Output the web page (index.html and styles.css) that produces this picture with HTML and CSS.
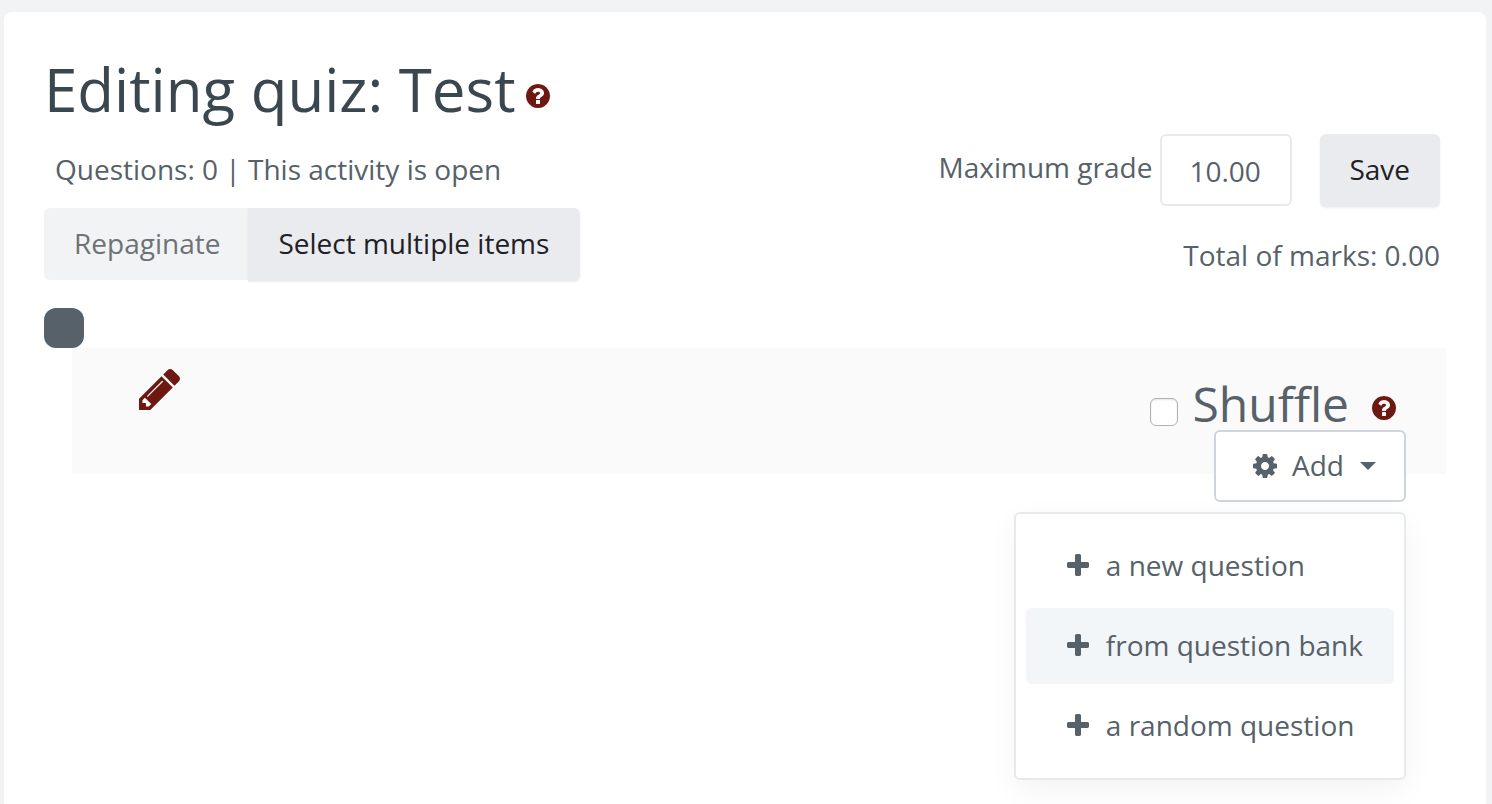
FILE: index.html
```html
<!DOCTYPE html>
<html lang="en">
<head>
<meta charset="utf-8">
<meta name="viewport" content="width=device-width, initial-scale=1">
<title>Editing quiz: Test</title>
<link rel="stylesheet" href="styles.css">
</head>
<body>
<svg class="sprite" aria-hidden="true">
  <symbol id="help" viewBox="128 128 1536 1536"><path d="M1024 1376v-192q0-14-9-23t-23-9h-192q-14 0-23 9t-9 23v192q0 14 9 23t23 9h192q14 0 23-9t9-23zm256-672q0-88-55.500-163t-138.500-116-170-41q-243 0-371 213-15 24 8 42l132 100q7 6 19 6 16 0 25-12 53-68 86-92 34-24 86-24 48 0 85.500 26t37.500 59q0 38-20 61t-68 45q-63 28-115.500 86.500t-52.500 125.500v36q0 14 9 23t23 9h192q14 0 23-9t9-23q0-19 21.500-49.500t54.500-49.500q32-18 49-28.500t46-35 44.500-48 28-60.500 12.500-81zm384 192q0 209-103 385.500t-279.500 279.500-385.500 103-385.500-103-279.500-279.500-103-385.500 103-385.500 279.500-279.500 385.500-103 385.500 103 279.500 279.500 103 385.500z"/></symbol>
  <symbol id="plus" viewBox="192 128 1408 1408"><path d="M1600 736v192q0 40-28 68t-68 28h-416v416q0 40-28 68t-68 28h-192q-40 0-68-28t-28-68v-416h-416q-40 0-68-28t-28-68v-192q0-40 28-68t68-28h416v-416q0-40 28-68t68-28h192q40 0 68 28t28 68v416h416q40 0 68 28t28 68z"/></symbol>
</svg>
<main class="card">
  <header class="title">
    <h1>Editing quiz: Test</h1>
    <button class="help" type="button" aria-label="Help with editing quiz"><svg class="icon"><use href="#help"/></svg></button>
  </header>

  <div class="toolbar">
    <div class="toolbar-left">
      <p class="status">Questions: 0 | This activity is open</p>
      <div class="btn-group">
        <button class="btn" type="button" disabled>Repaginate</button>
        <button class="btn" type="button">Select multiple items</button>
      </div>
    </div>
    <form class="grade">
      <div class="grade-row">
        <label for="grade">Maximum grade</label>
        <input class="grade-input" id="grade" type="text" value="10.00">
        <button class="btn" type="button">Save</button>
      </div>
      <p class="total">Total of marks: 0.00</p>
    </form>
  </div>

  <div class="marker"></div>
  <section class="section">
    <button class="edit" type="button" aria-label="Edit heading">
      <svg class="pencil" viewBox="128 149 1515 1515"><path d="M491 1536l91-91-235-235-91 91v107h128v128h107zm523-928q0-22-22-22-10 0-17 7l-542 542q-7 7-7 17 0 22 22 22 10 0 17-7l542-542q7-7 7-17zm-54-192l416 416-832 832h-416v-416zm683 96q0 53-37 90l-166 166-416-416 166-165q36-38 90-38 53 0 91 38l235 234q37 39 37 91z"/></svg>
    </button>
    <div class="section-tools">
      <div class="shuffle">
        <input class="check" id="shuffle" type="checkbox">
        <label for="shuffle">Shuffle</label>
        <button class="help" type="button" aria-label="Help with shuffle"><svg class="icon"><use href="#help"/></svg></button>
      </div>
      <div class="dropdown">
        <button class="add" type="button" aria-expanded="true">
          <svg class="icon" viewBox="128 128 1536 1536"><path d="M1152 896q0-106-75-181t-181-75-181 75-75 181 75 181 181 75 181-75 75-181zm512-109v222q0 12-8 23t-20 13l-185 28q-19 54-39 91 35 50 107 138 10 12 10 25t-9 23q-27 37-99 108t-94 71q-12 0-26-9l-138-108q-44 23-91 38-16 136-29 186-7 28-36 28h-222q-14 0-24.500-8.500t-11.500-21.500l-28-184q-49-16-90-37l-141 107q-10 9-25 9-14 0-25-11-126-114-165-168-7-10-7-23 0-12 8-23 15-21 51-66.500t54-70.500q-27-50-41-99l-183-27q-13-2-21-12.500t-8-23.500v-222q0-12 8-23t19-13l186-28q14-46 39-92-40-57-107-138-10-12-10-24 0-10 9-23 26-36 98.500-107.500t94.500-71.500q13 0 26 10l138 107q44-23 91-38 16-136 29-186 7-28 36-28h222q14 0 24.500 8.500t11.500 21.500l28 184q49 16 90 37l142-107q9-9 24-9 13 0 25 10 129 119 165 170 7 8 7 22 0 12-8 23-15 21-51 66.500t-54 70.500q26 50 41 98l183 28q13 2 21 12.500t8 23.500z"/></svg>
          <span class="add-label">Add</span>
          <span class="caret"></span>
        </button>
        <nav class="menu" aria-label="Add">
          <a class="item" href="#new"><svg class="plus"><use href="#plus"/></svg>a new question</a>
          <a class="item active" href="#bank"><svg class="plus"><use href="#plus"/></svg>from question bank</a>
          <a class="item" href="#random"><svg class="plus"><use href="#plus"/></svg>a random question</a>
        </nav>
      </div>
    </div>
  </section>
</main>
</body>
</html>
```
FILE: styles.css
```css
* { box-sizing: border-box; }

body {
  margin: 0;
  padding: 12px 6px 0 4px;
  background: #f2f3f5;
  color: #56616a;
  font: 28px/42px "Open Sans", "Noto Sans", sans-serif;
}

button, input {
  font: inherit;
  color: inherit;
}

button {
  border: 0;
  padding: 0;
  background: none;
}

h1, p { margin: 0; }

.sprite {
  position: absolute;
  width: 0;
  height: 0;
}

.card {
  min-height: calc(100vh - 12px);
  padding: 40px;
  border-radius: 8px 8px 0 0;
  background: #fff;
}

.title {
  display: flex;
  align-items: flex-start;
  gap: 10px;
  height: 82px;
}

h1 {
  color: #3a474f;
  font-size: 60px;
  font-weight: 400;
  line-height: 74px;
}

.help {
  display: flex;
  color: #6e1812;
}

.title .help { margin-top: 32px; }

.icon {
  width: 24px;
  height: 24px;
  fill: currentColor;
}

.toolbar {
  display: flex;
  justify-content: space-between;
  align-items: flex-start;
}

.status {
  height: 74px;
  padding: 14px 11px;
}

.btn-group {
  display: flex;
  align-items: flex-start;
}

.btn {
  height: 73px;
  padding: 0 30px 3px;
  border-radius: 6px;
  background: #eaebef;
  color: #1d2125;
  box-shadow: 0 1px 2px rgba(0, 0, 0, 0.08);
}

.btn-group .btn:first-child { border-radius: 6px 0 0 6px; }

.btn-group .btn:last-child {
  padding-right: 31px;
  border-radius: 0 6px 6px 0;
}

.btn:disabled {
  height: 72px;
  padding-bottom: 2px;
  padding-right: 28px;
  background: #f2f3f5;
  color: #6e7276;
  box-shadow: none;
}

.grade { padding-right: 6px; }

.grade-row {
  display: flex;
  align-items: flex-start;
}

.grade-row label { padding: 12px 8px; }

.grade-row .btn {
  padding-left: 29px;
}

.grade-input {
  width: 132px;
  height: 72px;
  margin-right: 28px;
  padding: 2px 27px 0;
  border: 2px solid #e7eaeb;
  border-radius: 6px;
  background: #fff;
}

.total {
  padding-top: 27px;
  text-align: right;
}

.marker {
  width: 40px;
  height: 40px;
  margin-top: 27px;
  border-radius: 12px;
  background: #56616a;
}

.section {
  display: flex;
  justify-content: space-between;
  align-items: flex-start;
  height: 126px;
  margin-left: 28px;
  padding: 20px 40px 0 67px;
  background: #fafafa;
}

.edit {
  display: flex;
  padding-top: 1px;
  color: #6e1812;
}

.pencil {
  width: 41px;
  height: 41px;
  fill: currentColor;
}

.section-tools {
  display: flex;
  flex-direction: column;
  align-items: flex-end;
  padding-top: 6px;
}

.shuffle {
  display: flex;
  align-items: center;
  height: 56px;
  padding: 4px 10px 0 0;
  font-size: 48px;
}

.shuffle .help {
  margin: 8px 0 0 23px;
}

.check {
  appearance: none;
  width: 28px;
  height: 28px;
  margin: 16px 14px 0 0;
  border: 1px solid #b0b0b0;
  border-radius: 6px;
  background: #fff;
  box-shadow: inset 0 1px 2px rgba(0, 0, 0, 0.1);
}

.dropdown { position: relative; }

.add {
  display: flex;
  align-items: center;
  gap: 15px;
  height: 72px;
  padding: 0 28px 0 37px;
  border: 2px solid #ced4da;
  border-radius: 6px;
  background: #fff;
}

.add-label { padding: 0 1px 2px 0; }

.caret {
  border: 8px solid transparent;
  border-top-color: currentColor;
  border-bottom: 0;
}

.menu {
  position: absolute;
  top: calc(100% + 10px);
  right: 0;
  display: grid;
  gap: 4px;
  padding: 14px 10px;
  border: 2px solid #e7eaeb;
  border-radius: 6px;
  background: #fff;
  box-shadow: 0 10px 30px rgba(0, 0, 0, 0.05);
}

.item {
  display: flex;
  align-items: center;
  gap: 17px;
  height: 76px;
  padding: 0 31px 2px 41px;
  border-radius: 6px;
  color: inherit;
  text-decoration: none;
  white-space: nowrap;
}

.active { background: #f3f6f9; }

.plus {
  width: 22px;
  height: 22px;
  fill: currentColor;
}
```
